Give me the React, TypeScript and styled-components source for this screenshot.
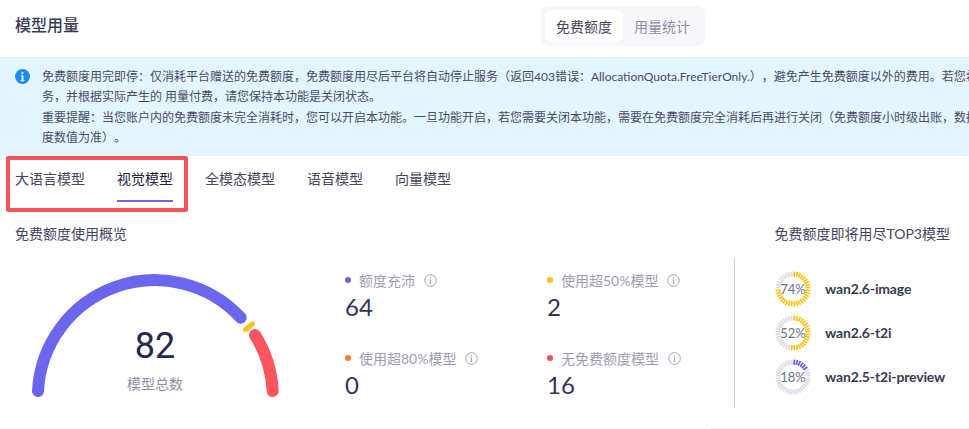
import React from "react";
import styled, { createGlobalStyle } from "styled-components";

const Global = createGlobalStyle`
  html, body { margin: 0; padding: 0; background: #fff; overflow: hidden; }
  * { box-sizing: border-box; }
`;

const FONT = `Lato, "Noto Sans CJK SC", sans-serif`;

const Page = styled.div`
  position: relative;
  width: 969px;
  height: 429px;
  overflow: hidden;
  font-family: ${FONT};
  color: #33335a;
  text-spacing-trim: space-all;
`;

const Header = styled.header`
  display: grid;
  grid-template-columns: 526px auto;
  align-items: center;
  height: 57px;
  padding: 0 0 5px 15px;
`;

const Title = styled.h1`
  margin: 0 0 2px;
  font-size: 16px;
  font-weight: 500;
  color: #3a3a55;
  line-height: 24px;
`;

const Segmented = styled.div`
  display: flex;
  width: 164px;
  height: 40px;
  padding: 4px;
  border-radius: 8px;
  background: #f7f7fb;
`;

const Segment = styled.div<{ $active?: boolean }>`
  width: 78px;
  display: flex;
  align-items: center;
  justify-content: center;
  border-radius: 6px;
  font-size: 14px;
  background: ${(p) => (p.$active ? "#fff" : "transparent")};
  color: ${(p) => (p.$active ? "#45455f" : "#8f8fa3")};
`;

const Banner = styled.section`
  display: flex;
  height: 99px;
  padding: 10px 0 0 15px;
  background: #e3f5fe;
  border-top: 1px solid #e2ebf2;
`;

const InfoIcon = styled.svg`
  flex: none;
  width: 15px;
  height: 15px;
  margin-top: 1px;
  margin-right: 12px;
`;

const BannerText = styled.p`
  margin: -1px 0 0;
  font-size: 12px;
  line-height: 20.4px;
  white-space: nowrap;
  color: #4a4a68;
`;

const Tabs = styled.nav`
  display: flex;
  gap: 32px;
  height: 46px;
  padding-left: 15px;
`;

const Tab = styled.div<{ $active?: boolean }>`
  height: 46px;
  padding-top: 12px;
  font-size: 14px;
  line-height: 22px;
  color: ${(p) => (p.$active ? "#23233f" : "#45455f")};
  border-bottom: 2px solid ${(p) => (p.$active ? "#6b66e8" : "transparent")};
`;

const Highlight = styled.div`
  position: absolute;
  left: 6px;
  top: 156px;
  width: 182px;
  height: 56px;
  border: 4px solid #f5525a;
  border-radius: 2px;
  pointer-events: none;
`;

const TitleRow = styled.div`
  display: flex;
  justify-content: space-between;
  align-items: center;
  height: 20px;
  margin-top: 22px;
  padding: 0 19px 0 15px;
`;

const SectionTitle = styled.h2`
  margin: 0;
  font-size: 14px;
  font-weight: 400;
  line-height: 20px;
  color: #45455f;
`;

const Overview = styled.div`
  display: flex;
  margin-top: 14px;
  padding-left: 15px;
`;

const GaugeBox = styled.div`
  position: relative;
  flex: none;
  width: 280px;
  height: 150px;
  margin-right: 50px;
`;

const GaugeSvg = styled.svg`
  display: block;
`;

const GaugeCenter = styled.div`
  position: absolute;
  left: 0;
  right: 0;
  top: 64px;
  display: flex;
  flex-direction: column;
  align-items: center;
`;

const GaugeValue = styled.div`
  font-family: Roboto, sans-serif;
  font-size: 36px;
  line-height: 48px;
  color: #27274f;
`;

const GaugeLabel = styled.div`
  margin-top: 4px;
  font-size: 14px;
  line-height: 20px;
  color: #8f8fa3;
`;

const Stats = styled.div`
  flex: none;
  display: grid;
  grid-template-columns: 202px 187px;
  grid-auto-rows: 78px;
  padding-top: 12px;
`;

const Stat = styled.div`
  display: flex;
  flex-direction: column;
`;

const StatHead = styled.div`
  display: flex;
  align-items: center;
  height: 20px;
  font-size: 14px;
  color: #9d9db2;
`;

const Dot = styled.i<{ $color: string }>`
  flex: none;
  width: 6px;
  height: 6px;
  margin: 0 8px 0 0;
  border-radius: 50%;
  background: ${(p) => p.$color};
`;

const TipIcon = styled.svg`
  flex: none;
  width: 13px;
  height: 13px;
  margin-left: 9px;
`;

const StatValue = styled.div`
  font-size: 24px;
  line-height: 34px;
  color: #33335a;
`;

const TopList = styled.div`
  display: flex;
  flex-direction: column;
  gap: 8px;
  width: 235px;
  height: 150px;
  padding: 13px 0 0 40px;
  border-left: 1px solid #cfcfe2;
`;

const TopRow = styled.div`
  display: flex;
  align-items: center;
  gap: 14px;
  height: 36px;
`;

const Ring = styled.div`
  position: relative;
  flex: none;
  width: 36px;
  height: 36px;
`;

const RingText = styled.span`
  position: absolute;
  inset: 0;
  display: flex;
  align-items: center;
  justify-content: center;
  font-size: 13px;
  color: #6f6f87;
`;

const TopName = styled.div`
  font-size: 14px;
  font-weight: 700;
  letter-spacing: -0.15px;
  color: #3a3a55;
  margin-top: -1px;
`;

const BottomRule = styled.div`
  position: absolute;
  left: 710px;
  right: 0;
  bottom: 0;
  height: 1px;
  background: #ececf2;
`;

const Tip = () => (
  <TipIcon viewBox="0 0 13 13" fill="none" stroke="#a3a3b8">
    <circle cx="6.5" cy="6.5" r="5.8" />
    <path d="M6.5 5.6v4" strokeWidth="1.1" />
    <path d="M5.5 5.6h1M5.4 9.6h2.2" strokeWidth="0.8" />
    <circle cx="6.5" cy="3.8" r="0.7" fill="#a3a3b8" stroke="none" />
  </TipIcon>
);

const TICKS = 36;
const Ticks: React.FC<{ pct: number; color: string }> = ({ pct, color }) => (
  <svg width="36" height="36" viewBox="0 0 36 36">
    {Array.from({ length: TICKS }, (_, i) => {
      const a = ((i + 0.5) / TICKS) * Math.PI * 2;
      const s = Math.sin(a);
      const c = Math.cos(a);
      return (
        <line
          key={i}
          x1={18 + 12.5 * s}
          y1={18 - 12.5 * c}
          x2={18 + 17.5 * s}
          y2={18 - 17.5 * c}
          strokeWidth="1.8"
          stroke={(i + 0.5) / TICKS <= pct / 100 ? color : "#dcdce8"}
        />
      );
    })}
  </svg>
);

const stats = [
  { label: "额度充沛", color: "#6b66e8", value: "64" },
  { label: "使用超50%模型", color: "#fcc419", value: "2" },
  { label: "使用超80%模型", color: "#fb7d2b", value: "0" },
  { label: "无免费额度模型", color: "#fa4d56", value: "16" },
];

const top = [
  { name: "wan2.6-image", pct: 74, color: "#fcc419" },
  { name: "wan2.6-t2i", pct: 52, color: "#fcc419" },
  { name: "wan2.5-t2i-preview", pct: 18, color: "#6b66e8" },
];

export default function App() {
  return (
    <Page>
      <Global />
      <Header>
        <Title>模型用量</Title>
        <Segmented>
          <Segment $active>免费额度</Segment>
          <Segment>用量统计</Segment>
        </Segmented>
      </Header>
      <Banner>
        <InfoIcon viewBox="0 0 15 15">
          <circle cx="7.5" cy="7.5" r="7.5" fill="#1b8cf2" />
          <circle cx="7.5" cy="4" r="1.1" fill="#fff" />
          <path d="M6 6.2h2.4v5H9.4v1H5.7v-1h1v-4H6z" fill="#fff" />
        </InfoIcon>
        <BannerText>
          免费额度用完即停：仅消耗平台赠送的免费额度，免费额度用尽后平台将自动停止服务（返回403错误：AllocationQuota.FreeTierOnly.），避免产生免费额度以外的费用。若您希望继续使用模型服
          <br />
          务，并根据实际产生的 用量付费，请您保持本功能是关闭状态。
          <br />
          重要提醒：当您账户内的免费额度未完全消耗时，您可以开启本功能。一旦功能开启，若您需要关闭本功能，需要在免费额度完全消耗后再进行关闭（免费额度小时级出账，数据
          <br />
          度数值为准）。
        </BannerText>
      </Banner>
      <Tabs>
        <Tab>大语言模型</Tab>
        <Tab $active>视觉模型</Tab>
        <Tab>全模态模型</Tab>
        <Tab>语音模型</Tab>
        <Tab>向量模型</Tab>
      </Tabs>
      <TitleRow>
        <SectionTitle>免费额度使用概览</SectionTitle>
        <SectionTitle>免费额度即将用尽TOP3模型</SectionTitle>
      </TitleRow>
      <Overview>
        <GaugeBox>
          <GaugeSvg width="280" height="150" viewBox="0 0 280 150" fill="none" strokeLinecap="round">
            <path d="M23 133A117 117 0 0 1 225.7 59.7" stroke="#6b66ee" strokeWidth="12" />
            <path d="M230.5 71.5L237.5 66" stroke="#fcc419" strokeWidth="5" />
            <path d="M240 77A117 117 0 0 1 257.7 133" stroke="#fb565e" strokeWidth="12" />
          </GaugeSvg>
          <GaugeCenter>
            <GaugeValue>82</GaugeValue>
            <GaugeLabel>模型总数</GaugeLabel>
          </GaugeCenter>
        </GaugeBox>
        <Stats>
          {stats.map((s) => (
            <Stat key={s.label}>
              <StatHead>
                <Dot $color={s.color} />
                {s.label}
                <Tip />
              </StatHead>
              <StatValue>{s.value}</StatValue>
            </Stat>
          ))}
        </Stats>
        <TopList>
          {top.map((t) => (
            <TopRow key={t.name}>
              <Ring>
                <Ticks pct={t.pct} color={t.color} />
                <RingText>{t.pct}%</RingText>
              </Ring>
              <TopName>{t.name}</TopName>
            </TopRow>
          ))}
        </TopList>
      </Overview>
      <Highlight />
      <BottomRule />
    </Page>
  );
}
